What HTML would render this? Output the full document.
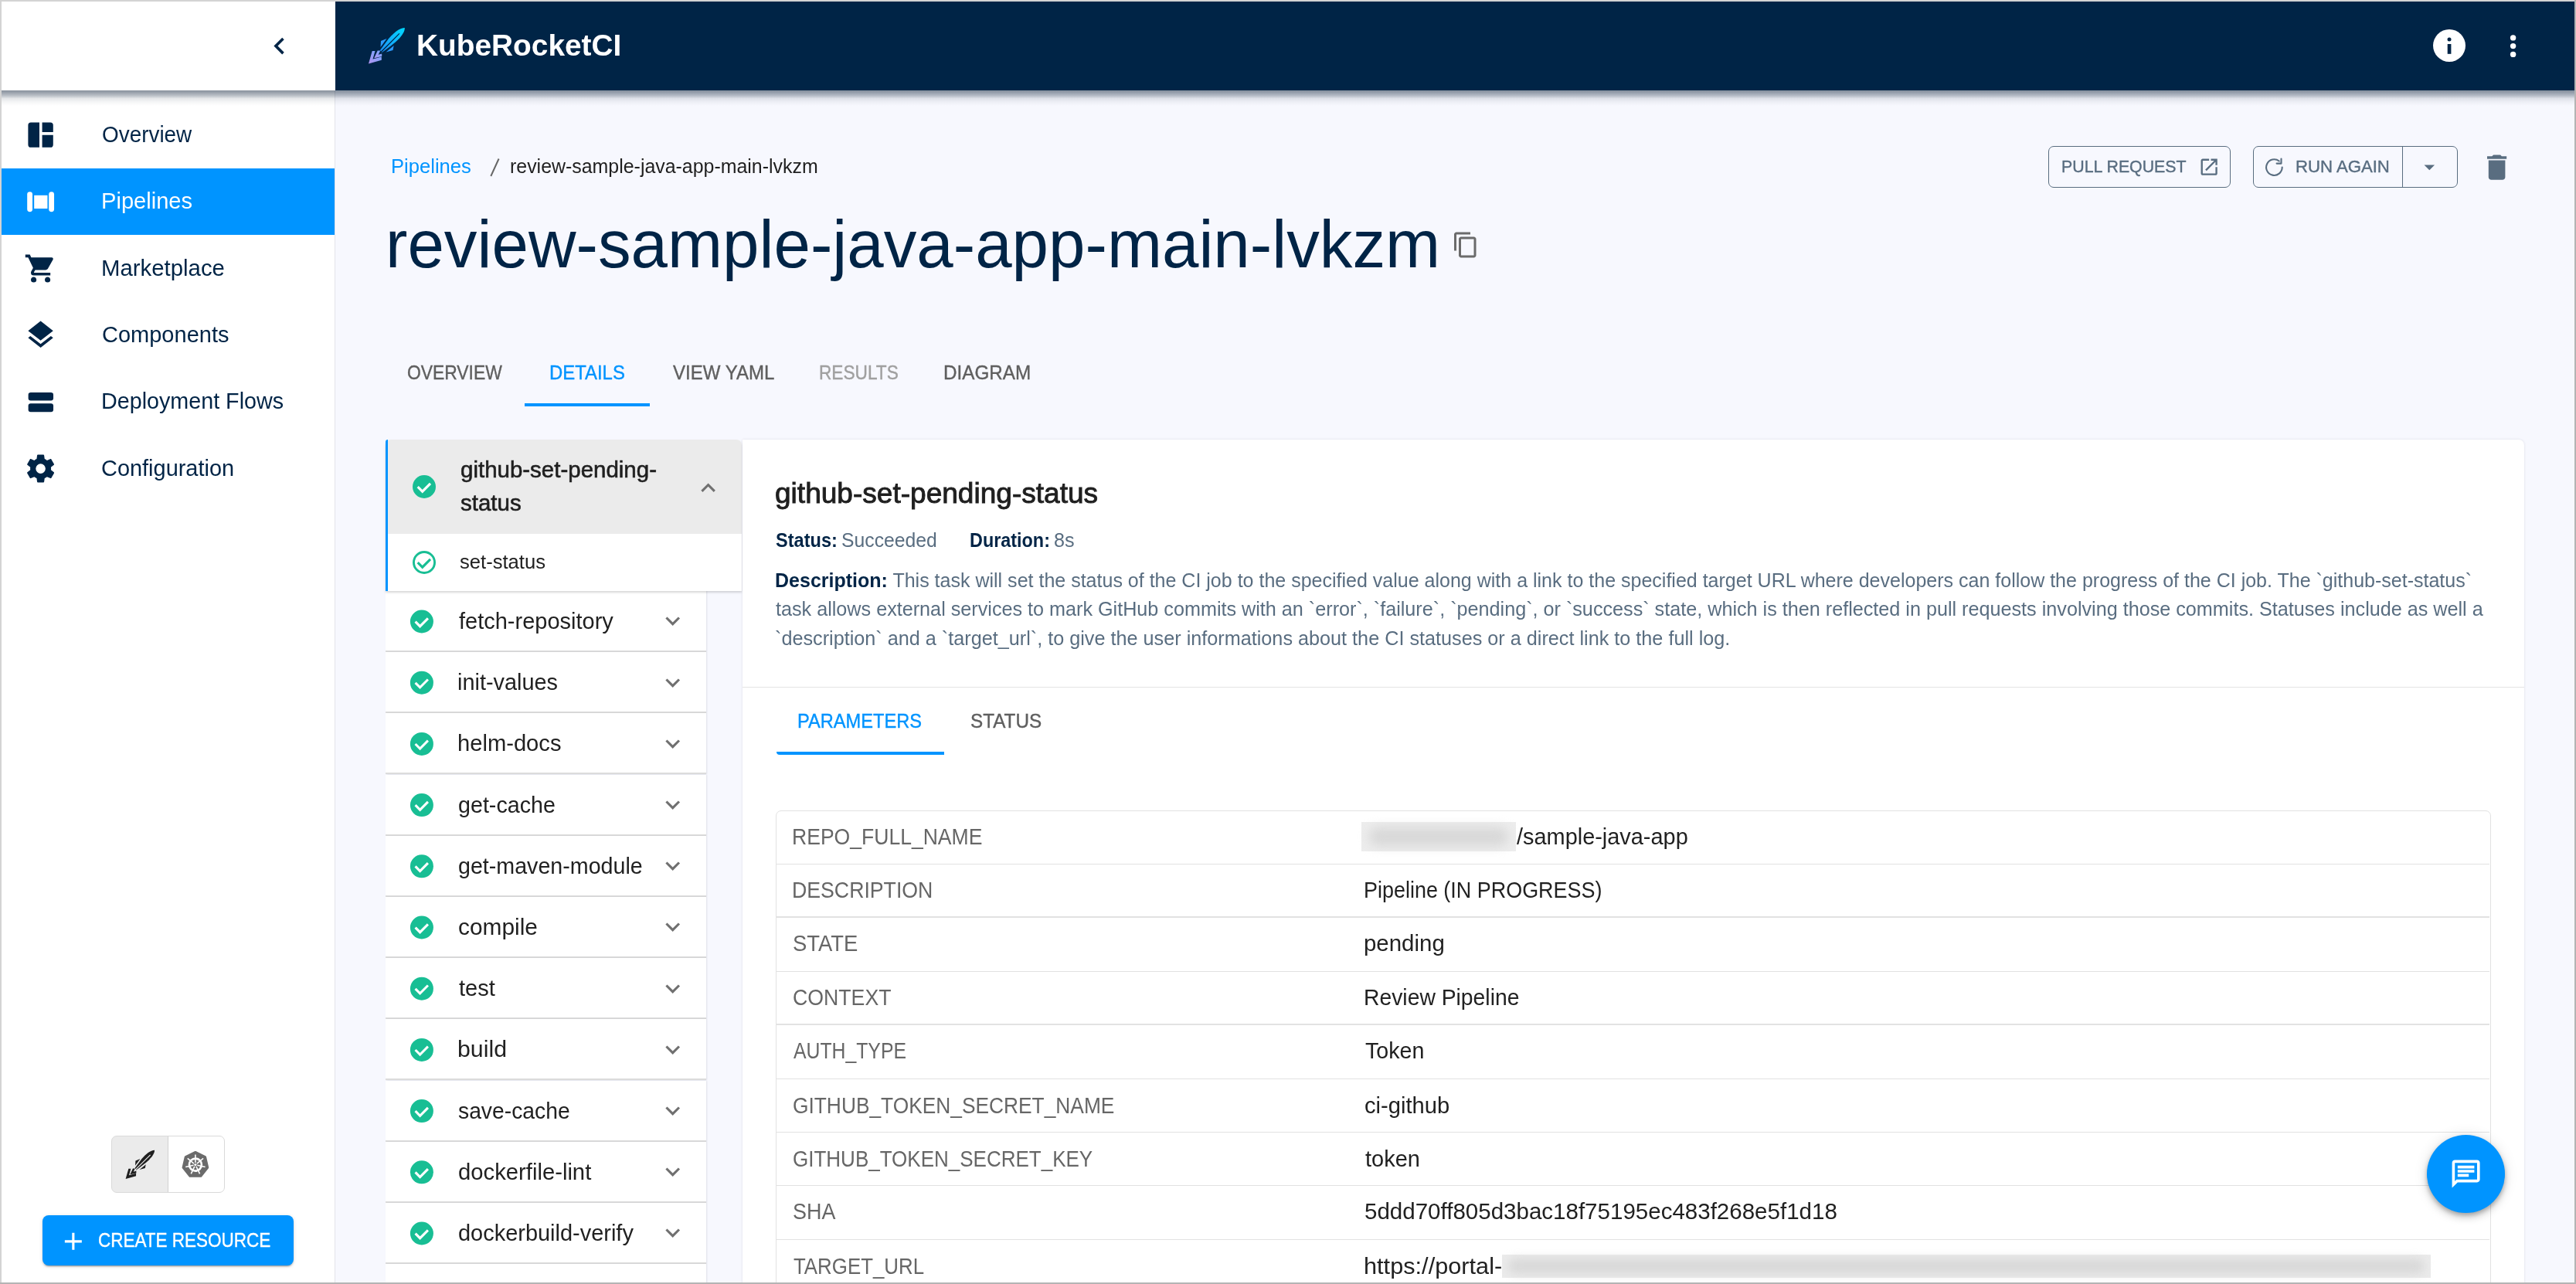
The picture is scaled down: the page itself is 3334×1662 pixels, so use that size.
<!DOCTYPE html>
<html><head><meta charset="utf-8">
<style>
*{box-sizing:border-box;margin:0;padding:0}
html,body{width:3334px;height:1662px;overflow:hidden}
body{position:relative;background:#f7f8fe;font-family:"Liberation Sans",sans-serif;color:#212121}
.a{position:absolute}
.t{position:absolute;white-space:nowrap;transform-origin:0 0}
svg{position:absolute;display:block;overflow:visible}
</style></head><body>
<div class="a" style="left:2.0px;top:2.0px;width:432.0px;height:115.0px;background:#fff"></div>
<div class="a" style="left:434.0px;top:2.0px;width:2898.0px;height:115.0px;background:#002446"></div>
<svg style="left:340.1px;top:37.9px" width="43.2" height="43.2" viewBox="0 0 24 24" fill="#002446"><path d="M15.41 7.41 14 6l-6 6 6 6 1.41-1.41L10.83 12z"/></svg>
<svg style="left:470px;top:30px" width="60" height="60" viewBox="0 0 60 60">
 <defs>
  <linearGradient id="rg" x1="1" y1="0" x2="0" y2="1"><stop offset="0" stop-color="#00d9ff"/><stop offset="1" stop-color="#1f8fff"/></linearGradient>
  <linearGradient id="cg" x1="1" y1="0" x2="0" y2="1"><stop offset="0" stop-color="#6fa6ff"/><stop offset="1" stop-color="#b294f0"/></linearGradient>
 </defs>
 <path fill="url(#rg)" d="M53.8 6 C47 6.5 40 12 33 20 L22 35 L24 38 C31 33 38 28 45 21.5 C51 15.5 54 10 53.8 6Z"/>
 <path fill="#002446" d="M46.5 13 L47.3 13.8 L23.2 38.2 L22.2 37.3Z"/>
 <path fill="#2a9bff" d="M23 23 L30.5 20 L22.5 31Z"/>
 <path fill="#2a9bff" d="M39.7 29 L38.5 35 L29.5 37.5Z"/>
 <path fill="url(#cg)" d="M11.7 36 L15.5 36 L12.5 46.5 L23.8 43.5 L23.8 47.8 L7 52.5Z"/>
 <path fill="url(#cg)" d="M18.7 35.5 L22.3 35.5 L19.7 40.8 L24.2 39.5 L24.2 43 L14.2 45.2Z"/>
</svg>
<div class="t" id="logo" style="left:539.2px;top:38.6px;font-size:39.5px;line-height:39.5px;color:#fff;font-weight:bold;transform:scaleX(0.9828);">KubeRocketCI</div>
<svg style="left:0;top:0" width="3334" height="120" viewBox="0 0 3334 120">
 <circle cx="3170" cy="59" r="21" fill="#fff"/>
 <circle cx="3170" cy="51" r="2.5" fill="#002446"/>
 <rect x="3167.7" y="57" width="4.7" height="12.8" fill="#002446"/>
 <circle cx="3252.6" cy="48.9" r="3.7" fill="#fff"/>
 <circle cx="3252.6" cy="59.6" r="3.7" fill="#fff"/>
 <circle cx="3252.6" cy="70.4" r="3.7" fill="#fff"/>
</svg>
<div class="a" style="left:2.0px;top:117.0px;width:432.0px;height:1545.0px;background:#fff;border-right:1.5px solid #e3e4ea"></div>
<div class="a" style="left:2.0px;top:217.6px;width:431.0px;height:86.4px;background:#0094ff"></div>
<svg style="left:30.8px;top:152.8px" width="43.2" height="43.2" viewBox="0 0 24 24" fill="#002446"><path d="M5 3h6.1v18H5a2 2 0 0 1-2-2V5a2 2 0 0 1 2-2zM13.1 3H19a2 2 0 0 1 2 2v5h-7.9zM13.1 12.1H21V19a2 2 0 0 1-2 2h-5.9z"/></svg>
<div class="t" id="nav0" style="left:131.6px;top:159.8px;font-size:28.8px;line-height:28.8px;color:#002446;font-weight:normal;transform:scaleX(0.9685);">Overview</div>
<svg style="left:30.8px;top:239.2px" width="43.2" height="43.2" viewBox="0 0 24 24" fill="#fff"><rect x="2.33" y="5.1" width="3.8" height="14.5" rx="1.9"/><rect x="17.9" y="5.1" width="3.8" height="14.5" rx="1.9"/><rect x="7.33" y="7.67" width="9.6" height="9.55"/></svg>
<div class="t" id="nav1" style="left:130.6px;top:246.2px;font-size:28.8px;line-height:28.8px;color:#fff;font-weight:normal;transform:scaleX(1.0106);">Pipelines</div>
<svg style="left:30.8px;top:325.6px" width="43.2" height="43.2" viewBox="0 0 24 24" fill="#002446"><path d="M17,18C15.89,18 15,18.89 15,20A2,2 0 0,0 17,22A2,2 0 0,0 19,20C19,18.89 18.1,18 17,18M1,2V4H3L6.6,11.59L5.24,14.04C5.09,14.32 5,14.65 5,15A2,2 0 0,0 7,17H19V15H7.42A0.25,0.25 0 0,1 7.17,14.75C7.17,14.7 7.18,14.66 7.2,14.63L8.1,13H15.55C16.3,13 16.96,12.58 17.3,11.970L20.88,5.5C20.95,5.34 21,5.17 21,5A1,1 0 0,0 20,4H5.21L4.27,2M7,18C5.89,18 5,18.89 5,20A2,2 0 0,0 7,22A2,2 0 0,0 9,20C9,18.89 8.1,18 7,18Z"/></svg>
<div class="t" id="nav2" style="left:130.6px;top:332.6px;font-size:28.8px;line-height:28.8px;color:#002446;font-weight:normal;transform:scaleX(1.0194);">Marketplace</div>
<svg style="left:30.8px;top:412.0px" width="43.2" height="43.2" viewBox="0 0 24 24" fill="#002446"><path d="M11.99 18.54l-7.37-5.73L3 14.07l9 7 9-7-1.630-1.27-7.38 5.74zM12 16l7.36-5.73L21 9l-9-7-9 7 1.63 1.27L12 16z"/></svg>
<div class="t" id="nav3" style="left:131.6px;top:419.0px;font-size:28.8px;line-height:28.8px;color:#002446;font-weight:normal;transform:scaleX(1.0072);">Components</div>
<svg style="left:30.8px;top:498.4px" width="43.2" height="43.2" viewBox="0 0 24 24" fill="#002446"><rect x="3.14" y="5.55" width="18" height="5.9" rx="1.7"/><rect x="3.14" y="13.5" width="18" height="6.1" rx="1.7"/></svg>
<div class="t" id="nav4" style="left:130.6px;top:505.4px;font-size:28.8px;line-height:28.8px;color:#002446;font-weight:normal;transform:scaleX(0.9966);">Deployment Flows</div>
<svg style="left:30.8px;top:584.8px" width="43.2" height="43.2" viewBox="0 0 24 24" fill="#002446"><path d="M12,15.5A3.5,3.5 0 0,1 8.5,12A3.5,3.5 0 0,1 12,8.5A3.5,3.5 0 0,1 15.5,12A3.5,3.5 0 0,1 12,15.5M19.43,12.97C19.47,12.65 19.5,12.33 19.5,12C19.5,11.67 19.47,11.34 19.43,11L21.54,9.37C21.73,9.22 21.78,8.95 21.66,8.73L19.66,5.27C19.54,5.05 19.27,4.96 19.05,5.05L16.56,6.05C16.04,5.66 15.5,5.32 14.87,5.07L14.5,2.42C14.46,2.18 14.25,2 14,2H10C9.75,2 9.54,2.18 9.5,2.42L9.13,5.07C8.5,5.32 7.96,5.66 7.44,6.05L4.95,5.05C4.73,4.96 4.46,5.05 4.34,5.27L2.34,8.73C2.21,8.95 2.27,9.22 2.46,9.37L4.57,11C4.53,11.34 4.5,11.67 4.5,12C4.5,12.33 4.53,12.65 4.57,12.97L2.46,14.63C2.27,14.78 2.21,15.05 2.34,15.27L4.34,18.73C4.46,18.95 4.73,19.03 4.95,18.95L7.44,17.94C7.96,18.34 8.5,18.68 9.13,18.93L9.5,21.58C9.54,21.82 9.75,22 10,22H14C14.25,22 14.46,21.82 14.5,21.58L14.87,18.93C15.5,18.67 16.04,18.34 16.56,17.94L19.05,18.95C19.27,19.03 19.54,18.95 19.66,18.73L21.66,15.27C21.78,15.05 21.73,14.78 21.54,14.63L19.43,12.97Z"/></svg>
<div class="t" id="nav5" style="left:131.4px;top:591.8px;font-size:28.8px;line-height:28.8px;color:#002446;font-weight:normal;transform:scaleX(1.0047);">Configuration</div>
<div class="a" style="left:2.0px;top:117.0px;width:3330.0px;height:20.0px;background:linear-gradient(rgba(0,20,45,0.45) 0px,rgba(0,20,45,0.42) 2px,rgba(0,20,45,0.26) 7px,rgba(0,20,45,0.10) 10.5px,rgba(0,20,45,0.04) 15px,rgba(0,20,45,0) 20px);z-index:5"></div>
<div class="t" id="bc1" style="left:506.4px;top:202.7px;font-size:25.2px;line-height:25.2px;color:#0094ff;font-weight:normal;transform:scaleX(1.016);">Pipelines</div>
<div class="t" id="bc3" style="left:660.2px;top:202.7px;font-size:25.2px;line-height:25.2px;color:#1f1f1f;font-weight:normal;transform:scaleX(0.989);">review-sample-java-app-main-lvkzm</div>
<div class="t" id="title" style="left:498.8px;top:272.7px;font-size:86.4px;line-height:86.4px;color:#002446;font-weight:normal;transform:scaleX(0.9874);">review-sample-java-app-main-lvkzm</div>
<svg style="left:1879.0px;top:298.5px" width="36.0" height="36.0" viewBox="0 0 24 24" fill="#6b6b6b"><path d="M16 1H4c-1.1 0-2 .9-2 2v14h2V3h12V1zm3 4H8c-1.1 0-2 .9-2 2v14c0 1.1.9 2 2 2h11c1.1 0 2-.9 2-2V7c0-1.1-.9-2-2-2zm0 16H8V7h11v14z"/></svg>
<div class="a" style="left:2651.0px;top:189.1px;width:236.0px;height:53.7px;border:1.6px solid #596d80;border-radius:7px"></div>
<div class="t" id="btn1" style="left:2667.8px;top:205.3px;font-size:22.5px;line-height:22.5px;color:#596d80;font-weight:normal;transform:scaleX(0.9479);-webkit-text-stroke:0.4px #596d80;">PULL REQUEST</div>
<svg style="left:2845.4px;top:201.9px" width="28.3" height="28.3" viewBox="0 0 24 24" fill="#596d80"><path d="M19 19H5V5h7V3H5c-1.11 0-2 .9-2 2v14c0 1.1.89 2 2 2h14c1.1 0 2-.9 2-2v-7h-2v7zM14 3v2h3.59l-9.83 9.83 1.41 1.41L19 6.41V10h2V3h-7z"/></svg>
<div class="a" style="left:2916.0px;top:189.1px;width:264.7px;height:53.7px;border:1.6px solid #596d80;border-radius:7px"></div>
<div class="a" style="left:3108.7px;top:189.1px;width:1.6px;height:53.7px;background:#596d80"></div>
<svg style="left:0;top:0" width="3334" height="300" viewBox="0 0 3334 300"><path d="M2949.74 208.48 A10.3 10.3 0 1 0 2953.7 216.6" fill="none" stroke="#596d80" stroke-width="2.1" stroke-linecap="round"/><polyline points="2952.5,205.6 2952.5,211.6 2946.6,211.6" fill="none" stroke="#596d80" stroke-width="2.1" stroke-linecap="round" stroke-linejoin="round"/><line x1="645.6" y1="205.5" x2="635.3" y2="228" stroke="#666" stroke-width="2"/></svg>
<div class="t" id="btn2" style="left:2971.2px;top:205.3px;font-size:22.5px;line-height:22.5px;color:#596d80;font-weight:normal;transform:scaleX(0.984);-webkit-text-stroke:0.4px #596d80;">RUN AGAIN</div>
<svg style="left:3127.9px;top:200.0px" width="32.6" height="32.6" viewBox="0 0 24 24" fill="#596d80"><path d="M7 10l5 5 5-5z"/></svg>
<svg style="left:3209.9px;top:194.6px" width="43.2" height="43.2" viewBox="0 0 24 24" fill="#596d80"><path d="M6 19c0 1.1.9 2 2 2h8c1.1 0 2-.9 2-2V7H6v12zM19 4h-3.5l-1-1h-5l-1 1H5v2h14V4z"/></svg>
<div class="t" id="tab0" style="left:527.1px;top:470.0px;font-size:25.2px;line-height:25.2px;color:#5f5f5f;font-weight:normal;transform:scaleX(0.9069);-webkit-text-stroke:0.4px #5f5f5f;">OVERVIEW</div>
<div class="t" id="tab1" style="left:710.9px;top:470.0px;font-size:25.2px;line-height:25.2px;color:#0094ff;font-weight:normal;transform:scaleX(0.9487);-webkit-text-stroke:0.4px #0094ff;">DETAILS</div>
<div class="t" id="tab2" style="left:870.5px;top:470.0px;font-size:25.2px;line-height:25.2px;color:#5f5f5f;font-weight:normal;transform:scaleX(0.9538);-webkit-text-stroke:0.4px #5f5f5f;">VIEW YAML</div>
<div class="t" id="tab3" style="left:1060.3px;top:470.0px;font-size:25.2px;line-height:25.2px;color:#a0a0a0;font-weight:normal;transform:scaleX(0.8992);-webkit-text-stroke:0.4px #a0a0a0;">RESULTS</div>
<div class="t" id="tab4" style="left:1220.9px;top:470.0px;font-size:25.2px;line-height:25.2px;color:#5f5f5f;font-weight:normal;transform:scaleX(0.9619);-webkit-text-stroke:0.4px #5f5f5f;">DIAGRAM</div>
<div class="a" style="left:679.0px;top:522.0px;width:161.6px;height:3.6px;background:#0094ff"></div>
<div class="a" style="left:498.9px;top:764.9px;width:415.4px;height:79.2px;background:#fff;border-bottom:2px solid #dcdcdc;box-shadow:1px 0 2px rgba(0,0,40,0.10)"></div>
<div class="a" style="left:498.9px;top:844.1px;width:415.4px;height:79.2px;background:#fff;border-bottom:2px solid #dcdcdc;box-shadow:1px 0 2px rgba(0,0,40,0.10)"></div>
<div class="a" style="left:498.9px;top:923.3px;width:415.4px;height:79.2px;background:#fff;border-bottom:2px solid #dcdcdc;box-shadow:1px 0 2px rgba(0,0,40,0.10)"></div>
<div class="a" style="left:498.9px;top:1002.5px;width:415.4px;height:79.2px;background:#fff;border-bottom:2px solid #dcdcdc;box-shadow:1px 0 2px rgba(0,0,40,0.10)"></div>
<div class="a" style="left:498.9px;top:1081.7px;width:415.4px;height:79.2px;background:#fff;border-bottom:2px solid #dcdcdc;box-shadow:1px 0 2px rgba(0,0,40,0.10)"></div>
<div class="a" style="left:498.9px;top:1160.9px;width:415.4px;height:79.2px;background:#fff;border-bottom:2px solid #dcdcdc;box-shadow:1px 0 2px rgba(0,0,40,0.10)"></div>
<div class="a" style="left:498.9px;top:1240.1px;width:415.4px;height:79.2px;background:#fff;border-bottom:2px solid #dcdcdc;box-shadow:1px 0 2px rgba(0,0,40,0.10)"></div>
<div class="a" style="left:498.9px;top:1319.3px;width:415.4px;height:79.2px;background:#fff;border-bottom:2px solid #dcdcdc;box-shadow:1px 0 2px rgba(0,0,40,0.10)"></div>
<div class="a" style="left:498.9px;top:1398.5px;width:415.4px;height:79.2px;background:#fff;border-bottom:2px solid #dcdcdc;box-shadow:1px 0 2px rgba(0,0,40,0.10)"></div>
<div class="a" style="left:498.9px;top:1477.7px;width:415.4px;height:79.2px;background:#fff;border-bottom:2px solid #dcdcdc;box-shadow:1px 0 2px rgba(0,0,40,0.10)"></div>
<div class="a" style="left:498.9px;top:1556.9px;width:415.4px;height:79.2px;background:#fff;border-bottom:2px solid #dcdcdc;box-shadow:1px 0 2px rgba(0,0,40,0.10)"></div>
<div class="a" style="left:498.9px;top:1636.1px;width:415.4px;height:79.2px;background:#fff;border-bottom:2px solid #dcdcdc;box-shadow:1px 0 2px rgba(0,0,40,0.10)"></div>
<div class="t" id="it0" style="left:593.8px;top:789.9px;font-size:28.8px;line-height:28.8px;color:#212121;font-weight:normal;transform:scaleX(1.007);">fetch-repository</div>
<svg style="left:851.7px;top:785.4px" width="37.4" height="37.4" viewBox="0 0 24 24" fill="#707070"><path d="M16.59 8.59 12 13.17 7.41 8.59 6 10l6 6 6-6z"/></svg>
<div class="t" id="it1" style="left:591.8px;top:869.1px;font-size:28.8px;line-height:28.8px;color:#212121;font-weight:normal;transform:scaleX(1.0031);">init-values</div>
<svg style="left:851.7px;top:864.6px" width="37.4" height="37.4" viewBox="0 0 24 24" fill="#707070"><path d="M16.59 8.59 12 13.17 7.41 8.59 6 10l6 6 6-6z"/></svg>
<div class="t" id="it2" style="left:591.8px;top:948.3px;font-size:28.8px;line-height:28.8px;color:#212121;font-weight:normal;transform:scaleX(1.0124);">helm-docs</div>
<svg style="left:851.7px;top:943.8px" width="37.4" height="37.4" viewBox="0 0 24 24" fill="#707070"><path d="M16.59 8.59 12 13.17 7.41 8.59 6 10l6 6 6-6z"/></svg>
<div class="t" id="it3" style="left:592.8px;top:1027.5px;font-size:28.8px;line-height:28.8px;color:#212121;font-weight:normal;transform:scaleX(0.9952);">get-cache</div>
<svg style="left:851.7px;top:1023.0px" width="37.4" height="37.4" viewBox="0 0 24 24" fill="#707070"><path d="M16.59 8.59 12 13.17 7.41 8.59 6 10l6 6 6-6z"/></svg>
<div class="t" id="it4" style="left:592.8px;top:1106.7px;font-size:28.8px;line-height:28.8px;color:#212121;font-weight:normal;transform:scaleX(0.9941);">get-maven-module</div>
<svg style="left:851.7px;top:1102.2px" width="37.4" height="37.4" viewBox="0 0 24 24" fill="#707070"><path d="M16.59 8.59 12 13.17 7.41 8.59 6 10l6 6 6-6z"/></svg>
<div class="t" id="it5" style="left:592.8px;top:1185.9px;font-size:28.8px;line-height:28.8px;color:#212121;font-weight:normal;transform:scaleX(1.0367);">compile</div>
<svg style="left:851.7px;top:1181.4px" width="37.4" height="37.4" viewBox="0 0 24 24" fill="#707070"><path d="M16.59 8.59 12 13.17 7.41 8.59 6 10l6 6 6-6z"/></svg>
<div class="t" id="it6" style="left:593.6px;top:1265.1px;font-size:28.8px;line-height:28.8px;color:#212121;font-weight:normal;transform:scaleX(1.0088);">test</div>
<svg style="left:851.7px;top:1260.6px" width="37.4" height="37.4" viewBox="0 0 24 24" fill="#707070"><path d="M16.59 8.59 12 13.17 7.41 8.59 6 10l6 6 6-6z"/></svg>
<div class="t" id="it7" style="left:591.6px;top:1344.3px;font-size:28.8px;line-height:28.8px;color:#212121;font-weight:normal;transform:scaleX(1.052);">build</div>
<svg style="left:851.7px;top:1339.8px" width="37.4" height="37.4" viewBox="0 0 24 24" fill="#707070"><path d="M16.59 8.59 12 13.17 7.41 8.59 6 10l6 6 6-6z"/></svg>
<div class="t" id="it8" style="left:592.6px;top:1423.5px;font-size:28.8px;line-height:28.8px;color:#212121;font-weight:normal;transform:scaleX(0.9822);">save-cache</div>
<svg style="left:851.7px;top:1419.0px" width="37.4" height="37.4" viewBox="0 0 24 24" fill="#707070"><path d="M16.59 8.59 12 13.17 7.41 8.59 6 10l6 6 6-6z"/></svg>
<div class="t" id="it9" style="left:592.6px;top:1502.7px;font-size:28.8px;line-height:28.8px;color:#212121;font-weight:normal;transform:scaleX(1.0154);">dockerfile-lint</div>
<svg style="left:851.7px;top:1498.2px" width="37.4" height="37.4" viewBox="0 0 24 24" fill="#707070"><path d="M16.59 8.59 12 13.17 7.41 8.59 6 10l6 6 6-6z"/></svg>
<div class="t" id="it10" style="left:592.6px;top:1581.9px;font-size:28.8px;line-height:28.8px;color:#212121;font-weight:normal;transform:scaleX(1.0054);">dockerbuild-verify</div>
<svg style="left:851.7px;top:1577.4px" width="37.4" height="37.4" viewBox="0 0 24 24" fill="#707070"><path d="M16.59 8.59 12 13.17 7.41 8.59 6 10l6 6 6-6z"/></svg>
<div class="a" style="left:498.9px;top:568.9px;width:461.2px;height:196.3px;background:#fff;border-radius:7px 7px 0 0;box-shadow:0 2px 3px rgba(0,0,0,0.16);overflow:hidden"></div>
<div class="a" style="left:498.9px;top:568.9px;width:461.2px;height:121.9px;background:#ebebeb;border-radius:7px 7px 0 0"></div>
<div class="a" style="left:498.9px;top:568.9px;width:3.2px;height:196.3px;background:#0094ff;border-radius:7px 0 0 0"></div>
<div class="t" id="sel1" style="left:595.5px;top:593.8px;font-size:28.8px;line-height:28.8px;color:#1f1f1f;font-weight:normal;transform:scaleX(1.0235);-webkit-text-stroke:0.6px #1f1f1f;">github-set-pending-</div>
<div class="t" id="sel2" style="left:596.3px;top:636.9px;font-size:28.8px;line-height:28.8px;color:#1f1f1f;font-weight:normal;transform:scaleX(1.0238);-webkit-text-stroke:0.6px #1f1f1f;">status</div>
<svg style="left:898.4px;top:612.6px" width="37.2" height="37.2" viewBox="0 0 24 24" fill="#707070"><path d="M12 8l-6 6 1.41 1.41L12 10.83l4.59 4.58L18 14z"/></svg>
<div class="t" id="sub1" style="left:595.3px;top:714.9px;font-size:25.2px;line-height:25.2px;color:#212121;font-weight:normal;transform:scaleX(1.0166);">set-status</div>
<div class="a" style="left:960.5px;top:568.9px;width:2306.0px;height:1100.0px;background:#fff;border-radius:0 7px 0 0;box-shadow:0 0 3px rgba(0,0,60,0.12)"></div>
<div class="t" id="dh" style="left:1003.2px;top:621.0px;font-size:36px;line-height:36px;color:#1f1f1f;font-weight:normal;transform:scaleX(1.0291);-webkit-text-stroke:0.9px #1f1f1f;">github-set-pending-status</div>
<div class="t" id="st1" style="left:1003.7px;top:686.8px;font-size:25.2px;line-height:25.2px;color:#002446;font-weight:bold;transform:scaleX(0.935);">Status:</div>
<div class="t" id="st2" style="left:1088.8px;top:686.8px;font-size:25.2px;line-height:25.2px;color:#596d80;font-weight:normal;transform:scaleX(0.9824);">Succeeded</div>
<div class="t" id="st3" style="left:1254.9px;top:686.8px;font-size:25.2px;line-height:25.2px;color:#002446;font-weight:bold;transform:scaleX(0.9284);">Duration:</div>
<div class="t" id="st4" style="left:1364.0px;top:686.8px;font-size:25.2px;line-height:25.2px;color:#596d80;font-weight:normal;transform:scaleX(0.999);">8s</div>
<div class="t" id="d1" style="left:1002.7px;top:738.8px;font-size:25.2px;line-height:25.2px;color:#596d80;font-weight:normal;transform:scaleX(0.993);"><b style="color:#002446">Description:</b> This task will set the status of the CI job to the specified value along with a link to the specified target URL where developers can follow the progress of the CI job. The `github-set-status`</div>
<div class="t" id="d2" style="left:1004.3px;top:776.3px;font-size:25.2px;line-height:25.2px;color:#596d80;font-weight:normal;transform:scaleX(0.9997);">task allows external services to mark GitHub commits with an `error`, `failure`, `pending`, or `success` state, which is then reflected in pull requests involving those commits. Statuses include as well a</div>
<div class="t" id="d3" style="left:1003.3px;top:813.6px;font-size:25.2px;line-height:25.2px;color:#596d80;font-weight:normal;transform:scaleX(1.0012);">`description` and a `target_url`, to give the user informations about the CI statuses or a direct link to the full log.</div>
<div class="a" style="left:960.5px;top:888.6px;width:2306.0px;height:1.6px;background:#e4e4e4"></div>
<div class="t" id="pt1" style="left:1031.5px;top:920.7px;font-size:25.2px;line-height:25.2px;color:#0094ff;font-weight:normal;transform:scaleX(0.9378);-webkit-text-stroke:0.4px #0094ff;">PARAMETERS</div>
<div class="t" id="pt2" style="left:1256.4px;top:920.7px;font-size:25.2px;line-height:25.2px;color:#5f5f5f;font-weight:normal;transform:scaleX(0.9639);-webkit-text-stroke:0.4px #5f5f5f;">STATUS</div>
<div class="a" style="left:1004.7px;top:972.8px;width:217.1px;height:4.0px;background:#0094ff;border-radius:0 0 0 4px"></div>
<div class="a" style="left:1003.7px;top:1049.3px;width:2220.4px;height:700.0px;border:1.6px solid #e2e2e2;border-radius:7px;background:#fff"></div>
<div class="a" style="left:1005.0px;top:1117.5px;width:2217.0px;height:1.6px;background:#e2e2e2"></div>
<div class="a" style="left:1005.0px;top:1186.4px;width:2217.0px;height:1.6px;background:#e2e2e2"></div>
<div class="a" style="left:1005.0px;top:1256.5px;width:2217.0px;height:1.6px;background:#e2e2e2"></div>
<div class="a" style="left:1005.0px;top:1325.4px;width:2217.0px;height:1.6px;background:#e2e2e2"></div>
<div class="a" style="left:1005.0px;top:1395.9px;width:2217.0px;height:1.6px;background:#e2e2e2"></div>
<div class="a" style="left:1005.0px;top:1464.9px;width:2217.0px;height:1.6px;background:#e2e2e2"></div>
<div class="a" style="left:1005.0px;top:1533.5px;width:2217.0px;height:1.6px;background:#e2e2e2"></div>
<div class="a" style="left:1005.0px;top:1603.7px;width:2217.0px;height:1.6px;background:#e2e2e2"></div>
<div class="t" id="rk0" style="left:1024.6px;top:1069.3px;font-size:28.8px;line-height:28.8px;color:#666666;font-weight:normal;transform:scaleX(0.9219);">REPO_FULL_NAME</div>
<div class="t" id="rv0" style="left:1963.3px;top:1069.3px;font-size:28.8px;line-height:28.8px;color:#212121;font-weight:normal;transform:scaleX(1.0038);">/sample-java-app</div>
<div class="t" id="rk1" style="left:1024.6px;top:1138.3px;font-size:28.8px;line-height:28.8px;color:#666666;font-weight:normal;transform:scaleX(0.9266);">DESCRIPTION</div>
<div class="t" id="rv1" style="left:1764.6px;top:1138.3px;font-size:28.8px;line-height:28.8px;color:#212121;font-weight:normal;transform:scaleX(0.9356);">Pipeline (IN PROGRESS)</div>
<div class="t" id="rk2" style="left:1025.6px;top:1207.2px;font-size:28.8px;line-height:28.8px;color:#666666;font-weight:normal;transform:scaleX(0.9519);">STATE</div>
<div class="t" id="rv2" style="left:1764.6px;top:1207.2px;font-size:28.8px;line-height:28.8px;color:#212121;font-weight:normal;transform:scaleX(1.0222);">pending</div>
<div class="t" id="rk3" style="left:1025.6px;top:1277.3px;font-size:28.8px;line-height:28.8px;color:#666666;font-weight:normal;transform:scaleX(0.9265);">CONTEXT</div>
<div class="t" id="rv3" style="left:1764.6px;top:1277.3px;font-size:28.8px;line-height:28.8px;color:#212121;font-weight:normal;transform:scaleX(0.9832);">Review Pipeline</div>
<div class="t" id="rk4" style="left:1026.6px;top:1346.2px;font-size:28.8px;line-height:28.8px;color:#666666;font-weight:normal;transform:scaleX(0.8605);">AUTH_TYPE</div>
<div class="t" id="rv4" style="left:1766.6px;top:1346.2px;font-size:28.8px;line-height:28.8px;color:#212121;font-weight:normal;transform:scaleX(0.9946);">Token</div>
<div class="t" id="rk5" style="left:1025.6px;top:1416.7px;font-size:28.8px;line-height:28.8px;color:#666666;font-weight:normal;transform:scaleX(0.9141);">GITHUB_TOKEN_SECRET_NAME</div>
<div class="t" id="rv5" style="left:1765.6px;top:1416.7px;font-size:28.8px;line-height:28.8px;color:#212121;font-weight:normal;transform:scaleX(1.0131);">ci-github</div>
<div class="t" id="rk6" style="left:1025.6px;top:1485.7px;font-size:28.8px;line-height:28.8px;color:#666666;font-weight:normal;transform:scaleX(0.9029);">GITHUB_TOKEN_SECRET_KEY</div>
<div class="t" id="rv6" style="left:1766.6px;top:1485.7px;font-size:28.8px;line-height:28.8px;color:#212121;font-weight:normal;transform:scaleX(1.0061);">token</div>
<div class="t" id="rk7" style="left:1025.6px;top:1554.3px;font-size:28.8px;line-height:28.8px;color:#666666;font-weight:normal;transform:scaleX(0.9347);">SHA</div>
<div class="t" id="rv7" style="left:1765.6px;top:1554.3px;font-size:28.8px;line-height:28.8px;color:#212121;font-weight:normal;transform:scaleX(1.0252);">5ddd70ff805d3bac18f75195ec483f268e5f1d18</div>
<div class="t" id="rk8" style="left:1026.6px;top:1624.5px;font-size:28.8px;line-height:28.8px;color:#666666;font-weight:normal;transform:scaleX(0.8978);">TARGET_URL</div>
<div class="t" id="rv8" style="left:1764.6px;top:1624.5px;font-size:28.8px;line-height:28.8px;color:#212121;font-weight:normal;transform:scaleX(1.0663);">https://portal-</div>
<div class="a" style="left:1761.9px;top:1064.0px;width:199.8px;height:37.9px;background:#ededed;overflow:hidden"></div>
<div class="a" style="left:1772.0px;top:1071.0px;width:180.0px;height:24.0px;background:#d8d8d8;filter:blur(7px);border-radius:12px"></div>
<div class="a" style="left:1943.8px;top:1624.3px;width:1202.4px;height:29.8px;background:#ebebeb"></div>
<div class="a" style="left:1952.0px;top:1629.0px;width:1186.0px;height:20.0px;background:#d9d9d9;filter:blur(6px);border-radius:10px"></div>
<div class="a" style="left:3141.0px;top:1469.0px;width:101.2px;height:101.2px;background:#0094ff;border-radius:50%;box-shadow:0 3px 5px rgba(0,0,0,0.2),0 6px 10px rgba(0,0,0,0.14),0 1px 18px rgba(0,0,0,0.12)"></div>
<svg style="left:3170.0px;top:1497.6px" width="43.2" height="43.2" viewBox="0 0 24 24" fill="#fff"><path d="M4 4h16v12H5.17L4 17.17V4m0-2c-1.1 0-1.99.9-1.99 2L2 22l4-4h14c1.1 0 2-.9 2-2V4c0-1.1-.9-2-2-2H4zm2 10h8v2H6v-2zm0-3h12v2H6V9zm0-3h12v2H6V6z"/></svg>
<div class="a" style="left:144.3px;top:1470.2px;width:146.4px;height:73.6px;border:1.5px solid #dadada;border-radius:7px;overflow:hidden;background:linear-gradient(to right,#ebebeb 0,#ebebeb 72.8px,#fff 72.8px)"></div>
<div class="a" style="left:217.2px;top:1471.0px;width:1.2px;height:72.0px;background:#d2d2d2"></div>
<svg style="left:157px;top:1484px" width="48" height="48" viewBox="0 0 60 60">
 <path fill="#1f1f1f" d="M53.8 6 C47 6.5 40 12 33 20 L22 35 L24 38 C31 33 38 28 45 21.5 C51 15.5 54 10 53.8 6Z"/>
 <path fill="#ebebeb" d="M46.5 13 L47.5 14 L23.2 38.2 L22.2 37.3Z"/>
 <path fill="#1f1f1f" d="M23 23 L30.5 20 L22.5 31Z"/>
 <path fill="#1f1f1f" d="M39.7 29 L38.5 35 L29.5 37.5Z"/>
 <path fill="#1f1f1f" d="M11.7 36 L15.5 36 L12.5 46.5 L23.8 43.5 L23.8 47.8 L7 52.5Z"/>
 <path fill="#1f1f1f" d="M18.7 35.5 L22.3 35.5 L19.7 40.8 L24.2 39.5 L24.2 43 L14.2 45.2Z"/>
</svg>
<svg style="left:0;top:0" width="3334" height="1662" viewBox="0 0 3334 1662">
 <polygon points="252.90,1491.40 265.57,1497.50 268.69,1511.20 259.93,1522.20 245.87,1522.20 237.11,1511.20 240.23,1497.50" fill="#6b6b6b" stroke="#6b6b6b" stroke-width="3" stroke-linejoin="round"/>
 <circle cx="252.9" cy="1507.6" r="8" fill="none" stroke="#fff" stroke-width="2.6"/>
 <circle cx="252.9" cy="1507.6" r="1.6" fill="#fff"/>
 <line x1="252.90" y1="1505.10" x2="252.90" y2="1494.60" stroke="#fff" stroke-width="1.6"/><line x1="254.85" y1="1506.04" x2="263.06" y2="1499.49" stroke="#fff" stroke-width="1.6"/><line x1="255.34" y1="1508.16" x2="265.57" y2="1510.49" stroke="#fff" stroke-width="1.6"/><line x1="253.98" y1="1509.85" x2="258.54" y2="1519.31" stroke="#fff" stroke-width="1.6"/><line x1="251.82" y1="1509.85" x2="247.26" y2="1519.31" stroke="#fff" stroke-width="1.6"/><line x1="250.46" y1="1508.16" x2="240.23" y2="1510.49" stroke="#fff" stroke-width="1.6"/><line x1="250.95" y1="1506.04" x2="242.74" y2="1499.49" stroke="#fff" stroke-width="1.6"/>
 <circle cx="545.9" cy="804.5" r="15" fill="#18be94"/><polyline points="537.6,804.6 543.6,810.7 553.9,800.3" fill="none" stroke="#fff" stroke-width="3.1"/><circle cx="545.9" cy="883.7" r="15" fill="#18be94"/><polyline points="537.6,883.8000000000001 543.6,889.9000000000001 553.9,879.5" fill="none" stroke="#fff" stroke-width="3.1"/><circle cx="545.9" cy="962.9" r="15" fill="#18be94"/><polyline points="537.6,963.0 543.6,969.1 553.9,958.6999999999999" fill="none" stroke="#fff" stroke-width="3.1"/><circle cx="545.9" cy="1042.1" r="15" fill="#18be94"/><polyline points="537.6,1042.1999999999998 543.6,1048.3 553.9,1037.8999999999999" fill="none" stroke="#fff" stroke-width="3.1"/><circle cx="545.9" cy="1121.3" r="15" fill="#18be94"/><polyline points="537.6,1121.3999999999999 543.6,1127.5 553.9,1117.1" fill="none" stroke="#fff" stroke-width="3.1"/><circle cx="545.9" cy="1200.5" r="15" fill="#18be94"/><polyline points="537.6,1200.6 543.6,1206.7 553.9,1196.3" fill="none" stroke="#fff" stroke-width="3.1"/><circle cx="545.9" cy="1279.7" r="15" fill="#18be94"/><polyline points="537.6,1279.8 543.6,1285.9 553.9,1275.5" fill="none" stroke="#fff" stroke-width="3.1"/><circle cx="545.9" cy="1358.9" r="15" fill="#18be94"/><polyline points="537.6,1359.0 543.6,1365.1000000000001 553.9,1354.7" fill="none" stroke="#fff" stroke-width="3.1"/><circle cx="545.9" cy="1438.1" r="15" fill="#18be94"/><polyline points="537.6,1438.1999999999998 543.6,1444.3 553.9,1433.8999999999999" fill="none" stroke="#fff" stroke-width="3.1"/><circle cx="545.9" cy="1517.3000000000002" r="15" fill="#18be94"/><polyline points="537.6,1517.4 543.6,1523.5000000000002 553.9,1513.1000000000001" fill="none" stroke="#fff" stroke-width="3.1"/><circle cx="545.9" cy="1596.5" r="15" fill="#18be94"/><polyline points="537.6,1596.6 543.6,1602.7 553.9,1592.3" fill="none" stroke="#fff" stroke-width="3.1"/><circle cx="549" cy="630" r="15" fill="#18be94"/><polyline points="540.7,630.1 546.7,636.2 557,625.8" fill="none" stroke="#fff" stroke-width="3.1"/><circle cx="549" cy="728" r="13.55" fill="none" stroke="#18be94" stroke-width="2.9"/><polyline points="540.7,728.1 546.7,734.2 557,723.8" fill="none" stroke="#18be94" stroke-width="3.1"/>
</svg>
<div class="a" style="left:55.0px;top:1573.0px;width:325.0px;height:65.0px;background:#0094ff;border-radius:8px;box-shadow:0 3px 1px -2px rgba(0,0,0,0.2),0 2px 2px 0 rgba(0,0,0,0.14),0 1px 5px 0 rgba(0,0,0,0.12)"></div>
<svg style="left:76.1px;top:1587.8px" width="37.7" height="37.7" viewBox="0 0 24 24" fill="#fff"><path d="M19 13h-6v6h-2v-6H5v-2h6V5h2v6h6v2z"/></svg>
<div class="t" id="cr" style="left:127.0px;top:1593.2px;font-size:25.5px;line-height:25.5px;color:#fff;font-weight:normal;transform:scaleX(0.8819);-webkit-text-stroke:0.4px #fff;">CREATE RESOURCE</div>
<div class="a" style="left:0.0px;top:0.0px;width:3334.0px;height:2.0px;background:#d3d3d3;z-index:50"></div>
<div class="a" style="left:0.0px;top:0.0px;width:2.0px;height:1662.0px;background:#d3d3d3;z-index:50"></div>
<div class="a" style="left:3332.0px;top:0.0px;width:2.0px;height:1662.0px;background:#b4b4b4;z-index:50"></div>
<div class="a" style="left:0.0px;top:1660.0px;width:3334.0px;height:2.0px;background:#b4b4b4;z-index:50"></div>
</body></html>
